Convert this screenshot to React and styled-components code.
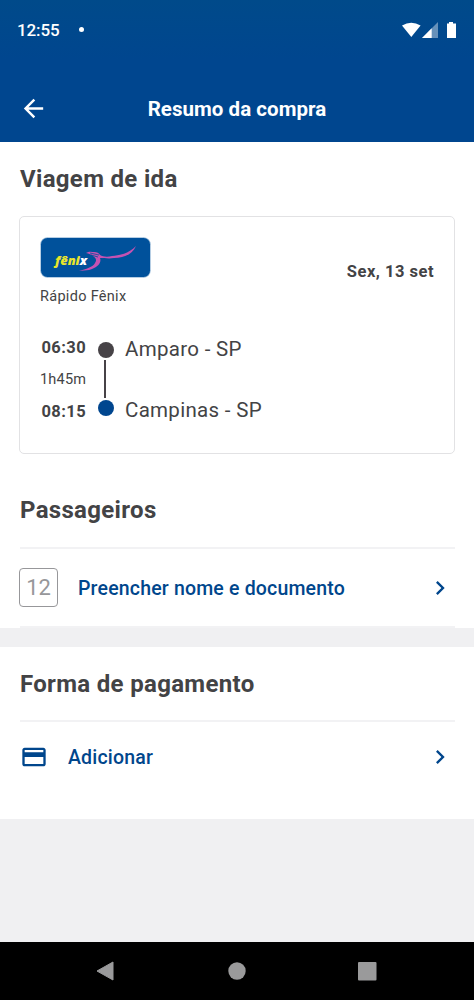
import React from 'react';
import styled, { createGlobalStyle } from 'styled-components';
import { MdArrowBack, MdChevronRight, MdCreditCard } from 'react-icons/md';

const colors = {
  brand: '#00468f',
  link: '#00468c',
  text: '#434345',
  muted: '#97979a',
  line: '#f2f2f4',
  border: '#e2e2e4',
  page: '#f0f0f2',
  nav: '#9a9a9b',
};

const GlobalStyle = createGlobalStyle`
  * {
    box-sizing: border-box;
  }
  body {
    margin: 0;
    background: ${colors.page};
    font-family: Roboto, "Liberation Sans", sans-serif;
    color: ${colors.text};
  }
`;

const Screen = styled.div`
  width: 100%;
  height: 1000px;
  display: flex;
  flex-direction: column;
  background: ${colors.page};
  overflow: hidden;
`;

const Header = styled.header`
  height: 142px;
  flex: none;
  color: white;
  background: linear-gradient(#004a8a, ${colors.brand} 60px);
`;

const StatusBar = styled.div`
  height: 59px;
  padding: 0 18px 0 17px;
  display: flex;
  align-items: center;
`;

const Clock = styled.span`
  width: 62px;
  font-size: 17px;
  font-weight: 500;
  line-height: 20px;
  letter-spacing: -0.1px;
  padding-top: 1px;
`;

const NoticeDot = styled.span`
  width: 5px;
  height: 5px;
  border-radius: 50%;
  background: white;
`;

const StatusIcons = styled.svg`
  width: 56px;
  height: 18px;
  margin-left: auto;
  fill: white;
`;

const TitleBar = styled.div`
  height: 99px;
  padding: 0 20px 0 19px;
  display: grid;
  grid-template-columns: 28px 1fr 27px;
  align-items: center;
  svg {
    display: block;
  }
`;

const Title = styled.h1`
  margin: 0;
  padding-top: 1px;
  font-size: 20.5px;
  font-weight: 700;
  line-height: 24px;
  text-align: center;
  letter-spacing: 0.05px;
`;

const Section = styled.section`
  height: ${({ $height }) => $height}px;
  flex: none;
  padding: 0 19px 0 20px;
  margin-bottom: ${({ $gap }) => $gap || 0}px;
  background: white;
`;

const Heading = styled.h2`
  margin: 0;
  padding-top: ${({ $top }) => $top}px;
  font-size: 24px;
  font-weight: 700;
  line-height: 28px;
  letter-spacing: 0.32px;
`;

const Card = styled.div`
  height: 238px;
  margin: 23px 0 0 -1px;
  padding: 20px;
  border: 1px solid ${colors.border};
  border-radius: 5px;
`;

const CardTop = styled.div`
  height: 100px;
  display: flex;
  justify-content: space-between;
`;

const Logo = styled.svg`
  display: block;
  width: 111px;
  height: 41px;
`;

const Company = styled.div`
  margin-top: 10px;
  font-size: 14.5px;
  line-height: 18px;
  letter-spacing: 0.3px;
`;

const TripDate = styled.div`
  padding-top: 25px;
  font-size: 16.5px;
  font-weight: 700;
  line-height: 20px;
  letter-spacing: 0.5px;
`;

const Route = styled.div`
  display: grid;
  grid-template-columns: 46px 39px 1fr;
  height: 92px;
`;

const Times = styled.div`
  display: flex;
  flex-direction: column;
  justify-content: space-between;
  height: 85px;
  padding-top: 1px;
  text-align: right;
`;

const Time = styled.span`
  font-size: 16.5px;
  font-weight: 700;
  line-height: 20px;
  letter-spacing: 0.4px;
`;

const Duration = styled.span`
  font-size: 14.5px;
  line-height: 22px;
  letter-spacing: 0.2px;
`;

const Track = styled.div`
  display: flex;
  flex-direction: column;
  align-items: center;
  padding-top: 5px;
  gap: 2px;
`;

const Stop = styled.span`
  width: 16px;
  height: 16px;
  border-radius: 50%;
  background: ${({ $arrival }) => $arrival ? colors.brand : '#474347'};
`;

const TrackLine = styled.span`
  width: 2px;
  height: 38px;
  margin-right: 1px;
  background: #474347;
`;

const Cities = styled.div`
  display: flex;
  flex-direction: column;
  gap: 37px;
`;

const City = styled.span`
  font-size: 20.5px;
  line-height: 24px;
  letter-spacing: 0.3px;
`;

const ActionRow = styled.div`
  height: ${({ $height }) => $height}px;
  margin-top: ${({ $top }) => $top}px;
  padding-right: 1px;
  border-top: 2px solid ${colors.line};
  border-bottom: ${({ $closed }) => $closed ? `2px solid ${colors.line}` : 'none'};
  display: flex;
  align-items: center;
`;

const Seat = styled.span`
  width: 39px;
  height: 39px;
  margin-left: -1px;
  border: 1px solid ${colors.muted};
  border-radius: 4px;
  color: ${colors.muted};
  font-size: 22px;
  line-height: 38px;
  text-align: center;
`;

const ActionLabel = styled.span`
  flex: 1;
  padding: 2px 0 0 ${({ $left }) => $left}px;
  font-size: 19.5px;
  font-weight: 500;
  line-height: 24px;
  letter-spacing: 0.18px;
  color: ${colors.link};
`;

const NavBar = styled.nav`
  height: 58px;
  flex: none;
  margin-top: auto;
  padding: 0 97px 0 96px;
  display: flex;
  align-items: center;
  justify-content: space-between;
  background: black;
  svg {
    display: block;
    fill: ${colors.nav};
  }
`;

const FenixLogo = () => (
  <Logo viewBox="0 0 111 41">
    <rect x="0.5" y="0.5" width="110" height="40" rx="7" fill="#00519b" stroke="#cfe0ee" strokeWidth="0.7" />
    <path
      d="M46 16c3-2 6-1 8-1 3 0 5 1 6 3 3 2 8 2 12 1 8-1 16-2 24-10-4 9-13 12-22 12-5 1-10 0-14 0 2 5-3 10-11 12l-10 1c7-2 14-4 16-8 2-3 1-5-2-7-2-2-4-2-7-3z"
      fill="#c552b2"
    />
    <path d="M50 16l9 2M51 18l7 2" stroke="#00519b" strokeWidth="0.8" />
    <text
      x="15"
      y="27.500"
      fontFamily="Open Sans, sans-serif"
      fontSize="12"
      fontWeight="800"
      fontStyle="italic"
      textLength="32"
      lengthAdjust="spacingAndGlyphs"
      fill="#e9e52c"
    >
      fêni<tspan fill="white">x</tspan>
    </text>
  </Logo>
);

const Chevron = () => <MdChevronRight size={28} color={colors.link} />;

const App = () => (
  <Screen>
    <GlobalStyle />
    <Header>
      <StatusBar>
        <Clock>12:55</Clock>
        <NoticeDot />
        <StatusIcons viewBox="0 0 56 18">
          <path d="M2 4.5Q11.3-1 20.6 4.5L11.3 16z" />
          <path d="M38 1v16H22z" opacity="0.4" />
          <path d="M31.7 7.3V17H22z" />
          <path d="M49 1h4v1.5h3V17h-9V2.500h2z" />
        </StatusIcons>
      </StatusBar>
      <TitleBar>
        <MdArrowBack size={29} />
        <Title>Resumo da compra</Title>
      </TitleBar>
    </Header>
    <Section $height={486} $gap={19}>
      <Heading $top={23}>Viagem de ida</Heading>
      <Card>
        <CardTop>
          <div>
            <FenixLogo />
            <Company>Rápido Fênix</Company>
          </div>
          <TripDate>Sex, 13 set</TripDate>
        </CardTop>
        <Route>
          <Times>
            <Time>06:30</Time>
            <Duration>1h45m</Duration>
            <Time>08:15</Time>
          </Times>
          <Track>
            <Stop />
            <TrackLine />
            <Stop $arrival />
          </Track>
          <Cities>
            <City>Amparo - SP</City>
            <City>Campinas - SP</City>
          </Cities>
        </Route>
      </Card>
      <Heading $top={42}>Passageiros</Heading>
      <ActionRow $top={23} $height={81} $closed>
        <Seat>12</Seat>
        <ActionLabel $left={20}>Preencher nome e documento</ActionLabel>
        <Chevron />
      </ActionRow>
    </Section>
    <Section $height={172}>
      <Heading $top={23}>Forma de pagamento</Heading>
      <ActionRow $top={22} $height={71}>
        <MdCreditCard size={28} color={colors.link} />
        <ActionLabel $left={20}>Adicionar</ActionLabel>
        <Chevron />
      </ActionRow>
    </Section>
    <NavBar>
      <svg width="18" height="20">
        <path d="M17 1v18L1 10z" stroke={colors.nav} strokeLinejoin="round" />
      </svg>
      <svg width="20" height="18">
        <circle cx="11" cy="9" r="8.700" />
      </svg>
      <svg width="19" height="19">
        <rect width="18.500" height="18.500" rx="1" />
      </svg>
    </NavBar>
  </Screen>
);

export default App;
